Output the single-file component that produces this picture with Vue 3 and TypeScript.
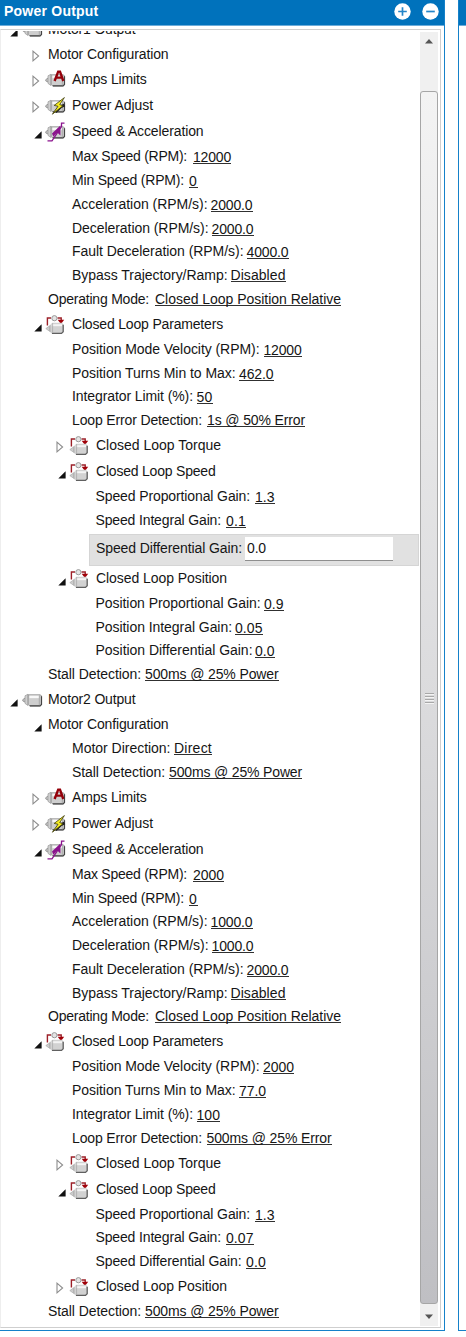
<script setup lang="ts">
import type { Directive } from 'vue'

type Icon = 'motor' | 'amps' | 'power' | 'speed' | 'loop'

interface Row {
  depth: number
  label: string
  width: number
  state?: 'open' | 'closed'
  icon?: Icon
  value?: string
  gap?: number
  valueWidth?: number
  numeric?: boolean
  editing?: boolean
}

const branch = (depth: number, label: string, width: number, state: 'open' | 'closed', icon?: Icon): Row =>
  ({ depth, label, width, state, icon })
const num = (depth: number, label: string, width: number, gap: number, value: string, valueWidth: number): Row =>
  ({ depth, label, width, gap, value, valueWidth, numeric: true })
const choice = (depth: number, label: string, width: number, gap: number, value: string, valueWidth: number): Row =>
  ({ depth, label, width, gap, value, valueWidth })

const speedRows = (max: string, maxWidth: number, ramp: string, fault: string): Row[] => [
  branch(1, 'Speed & Acceleration', 131.5, 'open', 'speed'),
  num(2, 'Max Speed (RPM):', 115, 6, max, maxWidth),
  num(2, 'Min Speed (RPM):', 112, 5, '0', 8.5),
  num(2, 'Acceleration (RPM/s):', 135.5, 3, ramp, 42),
  num(2, 'Deceleration (RPM/s):', 136.5, 3, ramp, 42),
  num(2, 'Fault Deceleration (RPM/s):', 171.5, 3, fault, 42),
  choice(2, 'Bypass Trajectory/Ramp:', 155.5, 3, 'Disabled', 55),
  choice(1, 'Operating Mode:', 101, 6, 'Closed Loop Position Relative', 186),
  branch(1, 'Closed Loop Parameters', 151, 'open', 'loop'),
]

const rows: Row[] = [
  branch(0, 'Motor1 Output', 87.5, 'open', 'motor'),
  branch(1, 'Motor Configuration', 120.5, 'closed'),
  branch(1, 'Amps Limits', 74.5, 'closed', 'amps'),
  branch(1, 'Power Adjust', 81, 'closed', 'power'),
  ...speedRows('12000', 38, '2000.0', '4000.0'),
  num(2, 'Position Mode Velocity (RPM):', 187.5, 4, '12000', 38),
  num(2, 'Position Turns Min to Max:', 163.5, 3.5, '462.0', 34.5),
  num(2, 'Integrator Limit (%):', 121, 3.5, '50', 16),
  choice(2, 'Loop Error Detection:', 130, 5, '1s @ 50% Error', 98),
  branch(2, 'Closed Loop Torque', 125, 'closed', 'loop'),
  branch(2, 'Closed Loop Speed', 119.5, 'open', 'loop'),
  num(3, 'Speed Proportional Gain:', 154.5, 5, '1.3', 19.5),
  num(3, 'Speed Integral Gain:', 125.5, 5, '0.1', 20),
  { depth: 3, label: 'Speed Differential Gain:', width: 146, value: '0.0', valueWidth: 19, editing: true },
  branch(2, 'Closed Loop Position', 131, 'open', 'loop'),
  num(3, 'Position Proportional Gain:', 165, 3.5, '0.9', 19.5),
  num(3, 'Position Integral Gain:', 136.5, 3, '0.05', 27.5),
  num(3, 'Position Differential Gain:', 157, 2.5, '0.0', 19.5),
  choice(1, 'Stall Detection:', 93, 4, '500ms @ 25% Power', 133.5),
  branch(0, 'Motor2 Output', 87.5, 'open', 'motor'),
  branch(1, 'Motor Configuration', 120.5, 'open'),
  choice(2, 'Motor Direction:', 98.5, 3.5, 'Direct', 38),
  choice(2, 'Stall Detection:', 93, 4, '500ms @ 25% Power', 133),
  branch(1, 'Amps Limits', 74.5, 'closed', 'amps'),
  branch(1, 'Power Adjust', 81, 'closed', 'power'),
  ...speedRows('2000', 31, '1000.0', '2000.0'),
  num(2, 'Position Mode Velocity (RPM):', 187.5, 3.5, '2000', 31),
  num(2, 'Position Turns Min to Max:', 163.5, 3.5, '77.0', 27),
  num(2, 'Integrator Limit (%):', 121, 3.5, '100', 23.5),
  choice(2, 'Loop Error Detection:', 130, 4.5, '500ms @ 25% Error', 125),
  branch(2, 'Closed Loop Torque', 125, 'closed', 'loop'),
  branch(2, 'Closed Loop Speed', 119.5, 'open', 'loop'),
  num(3, 'Speed Proportional Gain:', 154.5, 5, '1.3', 19.5),
  num(3, 'Speed Integral Gain:', 125.5, 5, '0.07', 27.5),
  num(3, 'Speed Differential Gain:', 146, 4.5, '0.0', 20),
  branch(2, 'Closed Loop Position', 131, 'closed', 'loop'),
  choice(1, 'Stall Detection:', 93, 4, '500ms @ 25% Power', 133.5),
]

const vTrack: Directive<HTMLElement, number | undefined> = {
  mounted(el, { value }) {
    if (!value) return
    const length = (el.textContent ?? '').length
    const natural = el.getBoundingClientRect().width
    el.style.letterSpacing = `${(value - natural) / length}px`
  },
}
</script>

<template>
  <div class="screen">
    <section class="panel">
      <header class="bar">
        <span class="title"><span v-track="94.5">Power Output</span></span>
        <svg class="round" viewBox="0 0 17 17"><circle cx="8.5" cy="8.5" r="8.2" /><path d="M4.2 8.5h8.6M8.5 4.2v8.6" /></svg>
        <svg class="round" viewBox="0 0 17 17"><circle cx="8.5" cy="8.5" r="8.2" /><path d="M4.2 8.5h8.6" /></svg>
      </header>
      <div class="view">
        <div class="tree">
          <div
            v-for="(row, i) in rows"
            :key="i"
            class="row"
            :class="[`d${row.depth}`, { iconed: row.icon, editing: row.editing }]"
          >
            <span v-if="row.state" class="toggle">
              <svg v-if="row.state === 'open'" class="open" viewBox="0 0 8 8"><path d="M7.6 0.3V7.6H0.3Z" /></svg>
              <svg v-else class="closed" viewBox="0 0 8 12"><path d="M1 1.2V10.8L6.6 6Z" /></svg>
            </span>
            <svg v-if="row.icon" class="icon" viewBox="0 0 20 20">
              <template v-if="row.icon === 'loop'">
                <path d="M2.4 10.5V3H6M12.5 3H16.2V5" fill="none" stroke="#9c2028" stroke-width="1.4" />
                <path d="M12.6 4.8H19.2L16 9Z" fill="#a00008" />
                <circle cx="9.4" cy="3.2" r="2.6" fill="#e4e4e4" stroke="#999" />
                <path d="M.8 13.6L4.5 11V16.2Z" fill="#ccc" stroke="#aaa" stroke-width=".7" />
                <path d="M5 10.2L7.2 7.8H17L18.4 9.4V17L16.6 18.8H7L5 17Z" fill="#d2d2d2" />
                <path d="M6.8 10.2H17" stroke="#f4f4f4" stroke-width="2" />
                <path d="M7 18.4H16.5L18.2 16.8V9.8" fill="none" stroke="#606060" stroke-width="1.3" />
                <path d="M5 10V17M7.6 8.2V17.8" stroke="#aaa" stroke-width=".8" />
              </template>
              <template v-else>
                <path d="M.8 9.6L3.4 7.8V12.2L.8 11Z" fill="#ccc" stroke="#888" stroke-width=".8" />
                <path d="M3 5.8L6 4.2V15.5L3 13.4Z" fill="#cfcfcf" stroke="#999" stroke-width=".7" />
                <path d="M6.2 4.8H18.4L19.5 6V14.8L18.2 16H7.8L6.2 14.4Z" fill="#cecece" stroke="#8a8a8a" stroke-width=".8" />
                <path d="M7.4 6.9H17" stroke="#f8f8f8" stroke-width="2.5" />
                <path d="M7.8 15.9H18L19.5 14.5V6.3" fill="none" stroke="#444" stroke-width="1.2" />
                <path d="M17.3 5.5V15.3" stroke="#999" stroke-width=".7" />
                <g v-if="row.icon === 'amps'">
                  <path d="M9.6 11L13.2 1.6H15L18.3 11M11 7.6H17" fill="none" stroke="#94000a" stroke-width="2.4" />
                </g>
                <g v-if="row.icon === 'power'">
                  <path d="M10.5 16L15.5 11L19.5 9" fill="none" stroke="#222" stroke-width="3" />
                  <path d="M19.4 1.6L9.2 9.4L13 10.3L7.4 18.2L18 9.7L14.7 8.6Z" fill="#f5ed23" stroke="#3b380a" stroke-width=".8" />
                </g>
                <g v-if="row.icon === 'speed'" fill="none" stroke="#8b138d">
                  <path d="M2.5 18.8H7L16.5 4.5V1.2H19.5" stroke-width="1.3" />
                  <path d="M7 11.6L15.4 3.4V13.4L12.3 10.6L8.4 14.8Z" fill="#8b138d" stroke="none" />
                </g>
              </template>
            </svg>
            <span class="label"><span v-track="row.width">{{ row.label }}</span></span>
            <span v-if="row.editing" class="field"><span v-track="row.valueWidth">{{ row.value }}</span></span>
            <span
              v-else-if="row.value"
              class="value"
              :class="{ numeric: row.numeric }"
              :style="{ marginLeft: row.gap + 'px' }"
            ><span v-track="row.valueWidth">{{ row.value }}</span></span>
          </div>
        </div>
        <div class="scroll">
          <svg class="arrow" viewBox="0 0 10 6"><path d="M1 5.5L5 1L9 5.5Z" /></svg>
          <div class="thumb"><i /><i /><i /><i /></div>
          <svg class="arrow" viewBox="0 0 10 6"><path d="M1 .5L5 5L9 .5Z" /></svg>
        </div>
      </div>
    </section>
    <section class="panel next"><header class="bar" /></section>
  </div>
</template>

<style>
body { background: #fff; }
</style>

<style scoped>
.screen {
  display: flex;
  gap: 13px;
  width: 466px;
  height: 1337px;
  overflow: hidden;
  font: 14px/16px "Liberation Sans", Arial, sans-serif;
  color: #151515;
}
.panel {
  box-sizing: border-box;
  width: 445px;
  height: 1331px;
  flex: none;
  display: flex;
  flex-direction: column;
  border: solid #1581c9;
  border-width: 0 1.5px 1px 0;
}
.next { border-width: 0 0 1px 1px; width: 20px; }
.bar {
  flex: none;
  display: flex;
  align-items: center;
  height: 26px;
  background: #0072bc;
  border-bottom: 1px solid #6bacda;
  color: #fff;
  font-weight: bold;
  padding: 0 5px 2px 4px;
  box-sizing: border-box;
}
.title { flex: 1; white-space: nowrap; margin-top: -1px; }
.round { width: 17px; height: 17px; margin-left: 11px; }
.round circle { fill: #fff; }
.round path { stroke: #2385c8; stroke-width: 1.7; fill: none; }
.view {
  flex: none;
  box-sizing: border-box;
  width: 441px;
  height: 1299px;
  margin-top: 3px;
  display: flex;
  border: 1px solid #cfcfcf;
  border-left-color: #eee;
}
.tree { flex: 1; overflow: hidden; margin-top: 1px; }
.tree .row:first-child { margin-top: -14px; }
.row {
  display: flex;
  align-items: center;
  height: 23.75px;
  white-space: nowrap;
}
.iconed { height: 26.2px; }
.d0 { padding-left: 7px; }
.d1 { padding-left: 47px; }
.d2 { padding-left: 71px; }
.d3 { padding-left: 94.5px; }
.d1:has(.toggle) { padding-left: 30.5px; }
.d2:has(.toggle) { padding-left: 54.5px; }
.toggle { width: 16.5px; height: 12px; flex: none; display: flex; }
.iconed .toggle { width: 13.5px; }
.open { width: 8px; height: 8px; margin: 5px 0 0 2px; fill: #111; }
.closed { width: 8px; height: 12px; margin-top: 1px; fill: #fff; stroke: #8c8c8c; stroke-width: 1.1; }
.icon { width: 20px; height: 20px; margin: 0 7px 0 0; flex: none; overflow: visible; }
.d0 .icon { margin-right: 6.5px; }
.label { margin-top: -2px; }
.editing .label { margin-top: -1px; }
.value { margin-top: -3px; }
.value > span { display: block; height: 14px; line-height: 16px; border-bottom: 1px solid #303030; }
.value.numeric { margin-top: -1px; }
.editing {
  box-sizing: border-box;
  height: 32px;
  margin: 1px 1px 0 88px;
  padding: 0 0 3px 6px;
  background: #e1e1e1;
  border: 1px solid #d5d5d5;
}
.field {
  box-sizing: border-box;
  width: 148px;
  height: 24px;
  margin: 2px 0 0 2.5px;
  padding: 3px 0 0 2.5px;
  background: #fff;
  border-bottom: 1px solid #8e8e8e;
}
.scroll {
  flex: none;
  width: 18px;
  margin: 2px 2px 1px 0;
  display: flex;
  flex-direction: column;
  align-items: center;
  background: #f0f0f0;
}
.arrow { width: 10px; height: 6px; margin: 6px 0; flex: none; fill: #555; }
.thumb {
  box-sizing: border-box;
  width: 18px;
  height: 1213px;
  margin: 41px 0 4px;
  border: 1px solid #a6a6a6;
  border-radius: 3px;
  background: linear-gradient(#f3f3f3, #dbdbdd 50%, #bfbfc3);
  display: flex;
  flex-direction: column;
  align-items: center;
  justify-content: center;
  gap: 2px;
}
.thumb i { width: 9px; height: 1px; background: #a8a8a8; box-shadow: 0 1px #f4f4f4; }
</style>
